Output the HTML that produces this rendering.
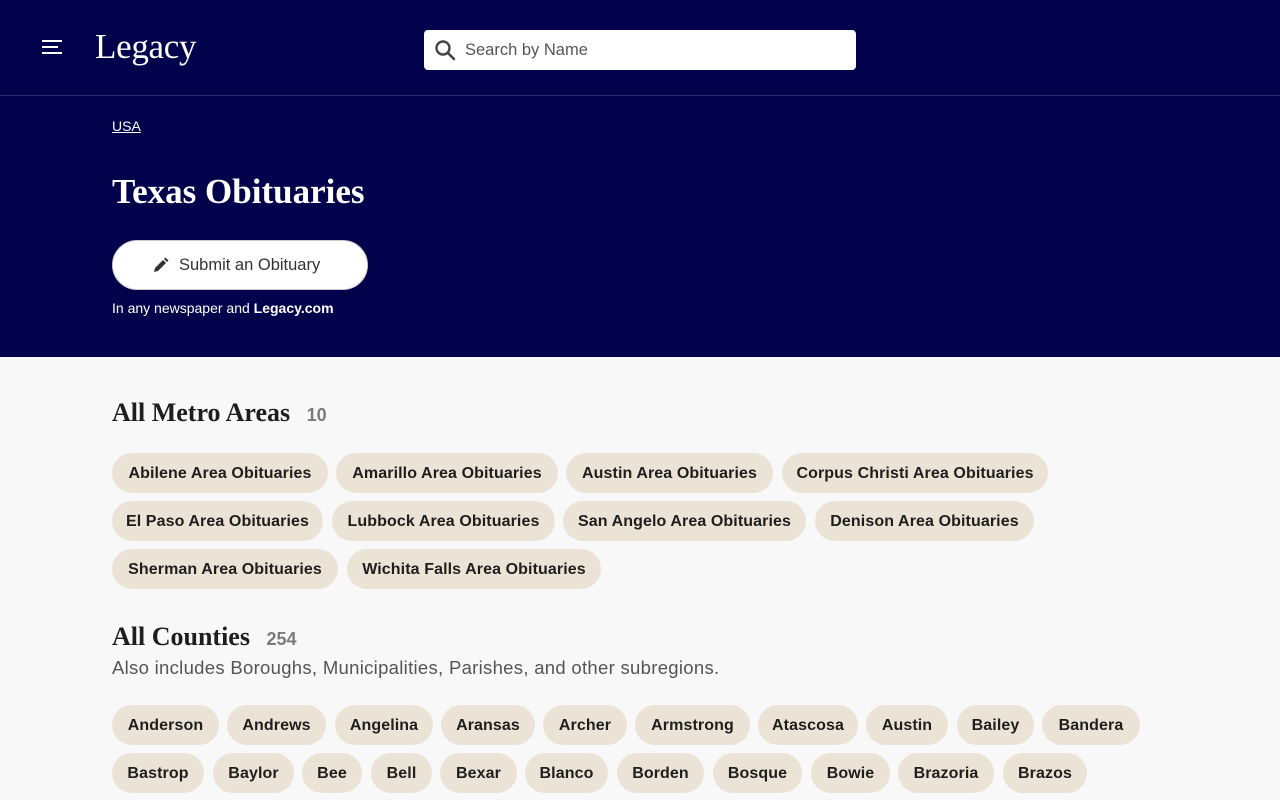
<!DOCTYPE html>
<html><head><meta charset="utf-8"><style>
*{margin:0;padding:0;box-sizing:border-box}
body{width:1280px;height:800px;overflow:hidden;background:#f8f8f8;font-family:"Liberation Sans",sans-serif;position:relative}
.hdr{position:absolute;left:0;top:0;width:1280px;height:96px;background:#02024c;border-bottom:1px solid #2a2a66}
.hero{position:absolute;left:0;top:96px;width:1280px;height:261px;background:#02024c}
.p{position:absolute;height:40px;border-radius:20px;background:#ebe3d5;color:#1e1e1e;font-weight:bold;font-size:16px;line-height:42px;text-align:center;white-space:nowrap;letter-spacing:0.1px}
.serif{font-family:"Liberation Serif",serif;font-weight:bold}
</style></head><body>
<div class="hdr">
 <div style="position:absolute;left:42px;top:40px;width:20px;height:2px;background:#fff"></div>
 <div style="position:absolute;left:42px;top:46px;width:16px;height:2px;background:#fff"></div>
 <div style="position:absolute;left:42px;top:52px;width:20px;height:2px;background:#fff"></div>
 <div style="position:absolute;left:95px;top:27px;color:#fff;font-family:'Liberation Serif',serif;font-size:35px;letter-spacing:-0.3px">Legacy</div>
 <div style="position:absolute;left:424px;top:30px;width:432px;height:40px;background:#fff;border-radius:4px">
  <svg style="position:absolute;left:10px;top:9px" width="22" height="22" viewBox="0 0 22 22"><circle cx="9" cy="9" r="6.5" fill="none" stroke="#444" stroke-width="2.4"/><path d="M14 14l6 6" stroke="#444" stroke-width="2.6" stroke-linecap="round"/></svg>
  <div style="position:absolute;left:41px;top:11px;font-size:16.5px;color:#555">Search by Name</div>
 </div>
</div>
<div class="hero">
 <div style="position:absolute;left:112px;top:22px;color:#fff;font-size:14px;text-decoration:underline">USA</div>
 <div class="serif" style="position:absolute;left:112px;top:76px;color:#fff;font-size:35px">Texas Obituaries</div>
 <div style="position:absolute;left:112px;top:144px;width:256px;height:50px;background:#fff;border-radius:25px;border:1px solid #ccc">
  <svg style="position:absolute;left:40px;top:16px" width="16" height="16" viewBox="0 0 16 16"><path d="M1 15l1-4 8-8 3 3-8 8z M11 2l1.5-1.5 3 3L14 5z" fill="#333"/></svg>
  <div style="position:absolute;left:66px;top:15px;font-size:16.5px;color:#333">Submit an Obituary</div>
 </div>
 <div style="position:absolute;left:112px;top:204px;color:#fff;font-size:14px">In any newspaper and <b>Legacy.com</b></div>
</div>
<div class="serif" style="position:absolute;left:112px;top:398px;font-size:26px;color:#1e1e1e">All Metro Areas <span style="font-family:'Liberation Sans';font-size:18px;color:#7a7a7a;margin-left:10px">10</span></div>
<div class="p" style="left:112px;top:453px;width:216px">Abilene Area Obituaries</div>
<div class="p" style="left:336px;top:453px;width:222px">Amarillo Area Obituaries</div>
<div class="p" style="left:566px;top:453px;width:207px">Austin Area Obituaries</div>
<div class="p" style="left:782px;top:453px;width:266px">Corpus Christi Area Obituaries</div>
<div class="p" style="left:112px;top:501px;width:211px">El Paso Area Obituaries</div>
<div class="p" style="left:332px;top:501px;width:223px">Lubbock Area Obituaries</div>
<div class="p" style="left:563px;top:501px;width:243px">San Angelo Area Obituaries</div>
<div class="p" style="left:815px;top:501px;width:219px">Denison Area Obituaries</div>
<div class="p" style="left:112px;top:549px;width:226px">Sherman Area Obituaries</div>
<div class="p" style="left:347px;top:549px;width:254px">Wichita Falls Area Obituaries</div>
<div class="serif" style="position:absolute;left:112px;top:622px;font-size:26px;color:#1e1e1e">All Counties <span style="font-family:'Liberation Sans';font-size:18px;color:#7a7a7a;margin-left:10px">254</span></div>
<div style="position:absolute;left:112px;top:657px;font-size:18.5px;color:#555;letter-spacing:0.3px">Also includes Boroughs, Municipalities, Parishes, and other subregions.</div>
<div class="p" style="left:112px;top:705px;width:107px">Anderson</div>
<div class="p" style="left:227px;top:705px;width:99px">Andrews</div>
<div class="p" style="left:335px;top:705px;width:98px">Angelina</div>
<div class="p" style="left:441px;top:705px;width:94px">Aransas</div>
<div class="p" style="left:543px;top:705px;width:84px">Archer</div>
<div class="p" style="left:635px;top:705px;width:115px">Armstrong</div>
<div class="p" style="left:758px;top:705px;width:100px">Atascosa</div>
<div class="p" style="left:866px;top:705px;width:82px">Austin</div>
<div class="p" style="left:957px;top:705px;width:77px">Bailey</div>
<div class="p" style="left:1042px;top:705px;width:98px">Bandera</div>
<div class="p" style="left:112px;top:753px;width:92px">Bastrop</div>
<div class="p" style="left:213px;top:753px;width:81px">Baylor</div>
<div class="p" style="left:302px;top:753px;width:60px">Bee</div>
<div class="p" style="left:371px;top:753px;width:61px">Bell</div>
<div class="p" style="left:440px;top:753px;width:77px">Bexar</div>
<div class="p" style="left:525px;top:753px;width:83px">Blanco</div>
<div class="p" style="left:617px;top:753px;width:87px">Borden</div>
<div class="p" style="left:713px;top:753px;width:89px">Bosque</div>
<div class="p" style="left:811px;top:753px;width:79px">Bowie</div>
<div class="p" style="left:898px;top:753px;width:96px">Brazoria</div>
<div class="p" style="left:1003px;top:753px;width:84px">Brazos</div>
</body></html>
